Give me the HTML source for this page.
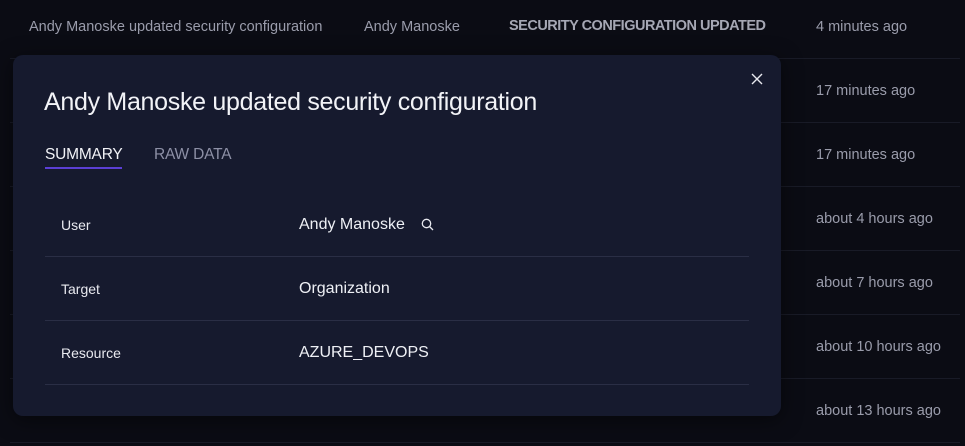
<!DOCTYPE html>
<html><head><style>
*{margin:0;padding:0;box-sizing:border-box}
body{width:965px;height:446px;overflow:hidden;background:#0b0c14;font-family:"Liberation Sans",sans-serif;position:relative;color:#9a9cab}
.row{position:absolute;left:10px;right:5px;height:64px;border-bottom:1px solid #191b27}
.c{position:absolute;font-size:14.5px;line-height:18px;white-space:nowrap;letter-spacing:0}
.modal{position:absolute;left:13px;top:55px;width:768px;height:361px;background:#161a2e;border-radius:10px;box-shadow:0 4px 20px rgba(0,0,0,.5)}
h1{position:absolute;left:31px;top:33px;font-size:25px;font-weight:normal;color:#f2f3f7;letter-spacing:-0.3px;white-space:nowrap}
.tab{position:absolute;top:91px;font-size:15.5px;letter-spacing:-0.2px}
.line{position:absolute;left:32px;width:704px;height:1px;background:#2a2e45}
.lab{position:absolute;left:48px;font-size:14px;color:#e8e9ef}
.val{position:absolute;left:286px;font-size:16px;color:#eef0f5}
</style></head><body>
<div class="c" style="left:29px;top:18px">Andy Manoske updated security configuration</div>
<div class="c" style="left:364px;top:18px">Andy Manoske</div>
<div class="c" style="left:509px;top:17px;font-weight:bold;color:#a5a7b4;letter-spacing:-0.5px">SECURITY CONFIGURATION UPDATED</div>
<div class="row" style="top:-5px;height:64px"></div>
<div class="row" style="top:59px"></div>
<div class="row" style="top:123px"></div>
<div class="row" style="top:187px"></div>
<div class="row" style="top:251px"></div>
<div class="row" style="top:315px"></div>
<div class="row" style="top:379px"></div>
<div class="c" style="left:816px;top:18px">4 minutes ago</div>
<div class="c" style="left:816px;top:82px">17 minutes ago</div>
<div class="c" style="left:816px;top:146px">17 minutes ago</div>
<div class="c" style="left:816px;top:210px">about 4 hours ago</div>
<div class="c" style="left:816px;top:274px">about 7 hours ago</div>
<div class="c" style="left:816px;top:338px">about 10 hours ago</div>
<div class="c" style="left:816px;top:402px">about 13 hours ago</div>
<div class="modal">
<svg style="position:absolute;left:738px;top:18px" width="12" height="12" viewBox="0 0 12 12"><path d="M1 1L11 11M11 1L1 11" stroke="#e8e9ef" stroke-width="1.4"/></svg>
<h1>Andy Manoske updated security configuration</h1>
<div class="tab" style="left:32px;color:#f2f3f7">SUMMARY</div>
<div style="position:absolute;left:32px;top:112px;width:77px;height:2px;background:#5b3fd6"></div>
<div class="tab" style="left:141px;color:#8d90a6">RAW DATA</div>
<div class="lab" style="top:162px">User</div>
<div class="val" style="top:161px">Andy Manoske</div>
<svg style="position:absolute;left:408px;top:163px" width="13" height="13" viewBox="0 0 13 13"><circle cx="5.5" cy="5.5" r="4.2" fill="none" stroke="#e8e9ef" stroke-width="1.3"/><path d="M8.5 8.5L12 12" stroke="#e8e9ef" stroke-width="1.3"/></svg>
<div class="line" style="top:201px"></div>
<div class="lab" style="top:226px">Target</div>
<div class="val" style="top:225px">Organization</div>
<div class="line" style="top:265px"></div>
<div class="lab" style="top:290px">Resource</div>
<div class="val" style="top:289px">AZURE_DEVOPS</div>
<div class="line" style="top:329px"></div>
</div>
</body></html>
